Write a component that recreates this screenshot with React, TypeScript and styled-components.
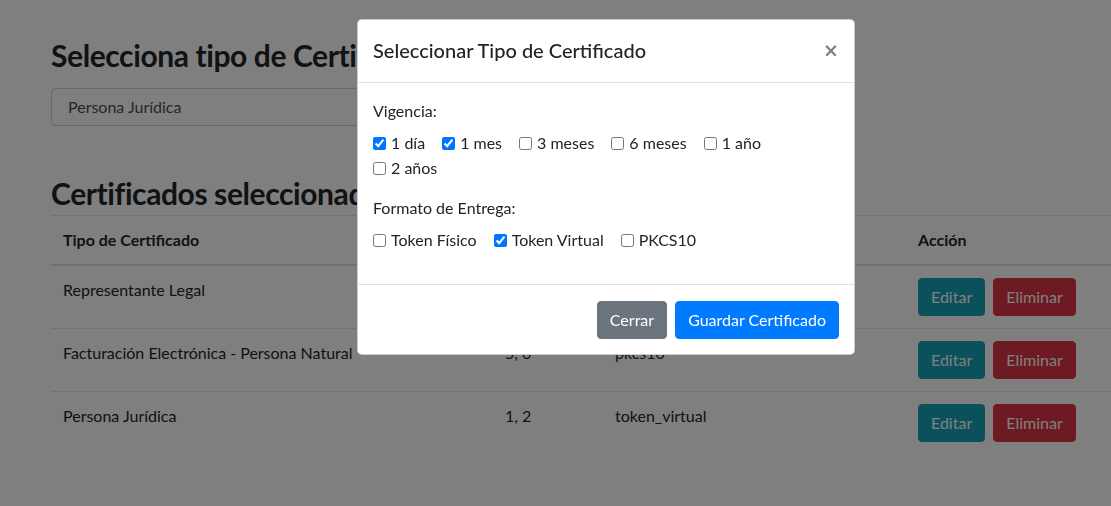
import React from "react";
import styled, { createGlobalStyle } from "styled-components";

const GlobalStyle = createGlobalStyle`
  * { box-sizing: border-box; }
  html, body { margin: 0; padding: 0; }
  body {
    font-family: Lato, "Noto Sans", "Liberation Sans", sans-serif;
    font-size: 16px;
    line-height: 1.5;
    color: #212529;
    background: #fff;
    overflow: hidden;
    width: 1111px;
    height: 506px;
  }
`;

const Page = styled.div`
  padding: 36px 0 0 51px;
  width: 1111px;
`;

const Heading = styled.h2<{ $mt?: number; $mb?: number }>`
  margin: ${(p) => p.$mt ?? 0}px 0 ${(p) => p.$mb ?? 14}px;
  font-size: 30px;
  font-weight: 700;
  letter-spacing: -0.4px;
  line-height: 38px;
`;

const Select = styled.div`
  width: 480px;
  height: 38px;
  padding: 6px 16px;
  border: 1px solid #ced4da;
  border-radius: 4px;
  color: #495057;
  font-size: 16px;
  line-height: 24px;
`;

const Table = styled.table`
  width: 1060px;
  border-collapse: collapse;
`;

const Th = styled.th<{ $w?: number }>`
  text-align: left;
  font-weight: 700;
  padding: 12px;
  border-top: 1px solid #dee2e6;
  border-bottom: 2px solid #dee2e6;
  width: ${(p) => (p.$w ? `${p.$w}px` : "auto")};
  line-height: 24px;
`;

const Td = styled.td`
  padding: 12px;
  border-top: 1px solid #dee2e6;
  vertical-align: top;
  line-height: 24px;
`;

const ActionCell = styled.div`
  display: flex;
  gap: 8px;
`;

const colors = {
  info: "#17a2b8",
  danger: "#dc3545",
  secondary: "#6c757d",
  primary: "#007bff",
};

const Button = styled.button<{ $variant: keyof typeof colors }>`
  font-family: inherit;
  font-size: 16px;
  line-height: 24px;
  padding: 6px 12px;
  border-radius: 4px;
  border: 1px solid ${(p) => colors[p.$variant]};
  background: ${(p) => colors[p.$variant]};
  color: #fff;
  cursor: pointer;
`;

const Backdrop = styled.div`
  position: fixed;
  inset: 0;
  background: rgba(0, 0, 0, 0.5);
`;

const ModalLayer = styled.div`
  position: fixed;
  inset: 0;
  padding: 19px 0 0 357px;
`;

const ModalContent = styled.div`
  width: 498px;
  background: #fff;
  border: 1px solid rgba(0, 0, 0, 0.2);
  border-radius: 5px;
  display: flex;
  flex-direction: column;
`;

const ModalHeader = styled.div`
  display: flex;
  align-items: center;
  justify-content: space-between;
  padding: 15px 15px 17px 15px;
  border-bottom: 1px solid #dee2e6;
`;

const ModalTitle = styled.h5`
  margin: 0;
  font-size: 20px;
  font-weight: 500;
  line-height: 30px;
`;

const Close = styled.button`
  border: 0;
  background: transparent;
  padding: 0;
  font-family: "DejaVu Sans", sans-serif;
  font-size: 19px;
  font-weight: 700;
  line-height: 1;
  color: #000;
  opacity: 0.5;
  text-shadow: 0 1px 0 #fff;
`;

const ModalBody = styled.div`
  padding: 16px 16px 16px 15px;
`;

const FormGroup = styled.div`
  margin-bottom: 16px;
`;

const Label = styled.div`
  margin-bottom: 8px;
`;

const CheckGroup = styled.div`
  display: flex;
  flex-wrap: wrap;
  column-gap: 17px;
  row-gap: 1px;
`;

const CheckItem = styled.label`
  display: inline-flex;
  align-items: center;
  line-height: 24px;
`;

const CheckBox = styled.input`
  width: 13px;
  height: 13px;
  margin: 0 5px 0 0;
`;

const ModalFooter = styled.div`
  display: flex;
  justify-content: flex-end;
  gap: 8px;
  padding: 16px 15px 15px;
  border-top: 1px solid #dee2e6;
`;

const vigencias = [
  { label: "1 día", checked: true },
  { label: "1 mes", checked: true },
  { label: "3 meses", checked: false },
  { label: "6 meses", checked: false },
  { label: "1 año", checked: false },
  { label: "2 años", checked: false },
];

const formatos = [
  { label: "Token Físico", checked: false },
  { label: "Token Virtual", checked: true },
  { label: "PKCS10", checked: false },
];

const rows = [
  { tipo: "Representante Legal", vig: "1, 2", fmt: "token_fisico" },
  { tipo: "Facturación Electrónica - Persona Natural", vig: "5, 6", fmt: "pkcs10" },
  { tipo: "Persona Jurídica", vig: "1, 2", fmt: "token_virtual" },
];

export default function App() {
  return (
    <>
      <GlobalStyle />
      <Page>
        <Heading>Selecciona tipo de Certificado</Heading>
        <Select>Persona Jurídica</Select>
        <Heading $mt={48} $mb={3}>
          Certificados seleccionados
        </Heading>
        <Table>
          <thead>
            <tr>
              <Th $w={442}>Tipo de Certificado</Th>
              <Th $w={110}>Vigencia</Th>
              <Th $w={303}>Formato</Th>
              <Th>Acción</Th>
            </tr>
          </thead>
          <tbody>
            {rows.map((r) => (
              <tr key={r.tipo}>
                <Td>{r.tipo}</Td>
                <Td>{r.vig}</Td>
                <Td>{r.fmt}</Td>
                <Td>
                  <ActionCell>
                    <Button $variant="info">Editar</Button>
                    <Button $variant="danger">Eliminar</Button>
                  </ActionCell>
                </Td>
              </tr>
            ))}
          </tbody>
        </Table>
      </Page>
      <Backdrop />
      <ModalLayer>
        <ModalContent>
          <ModalHeader>
            <ModalTitle>Seleccionar Tipo de Certificado</ModalTitle>
            <Close aria-label="Cerrar">×</Close>
          </ModalHeader>
          <ModalBody>
            <FormGroup>
              <Label>Vigencia:</Label>
              <CheckGroup>
                {vigencias.map((v) => (
                  <CheckItem key={v.label}>
                    <CheckBox type="checkbox" defaultChecked={v.checked} />
                    {v.label}
                  </CheckItem>
                ))}
              </CheckGroup>
            </FormGroup>
            <FormGroup>
              <Label>Formato de Entrega:</Label>
              <CheckGroup>
                {formatos.map((v) => (
                  <CheckItem key={v.label}>
                    <CheckBox type="checkbox" defaultChecked={v.checked} />
                    {v.label}
                  </CheckItem>
                ))}
              </CheckGroup>
            </FormGroup>
          </ModalBody>
          <ModalFooter>
            <Button $variant="secondary">Cerrar</Button>
            <Button $variant="primary">Guardar Certificado</Button>
          </ModalFooter>
        </ModalContent>
      </ModalLayer>
    </>
  );
}
